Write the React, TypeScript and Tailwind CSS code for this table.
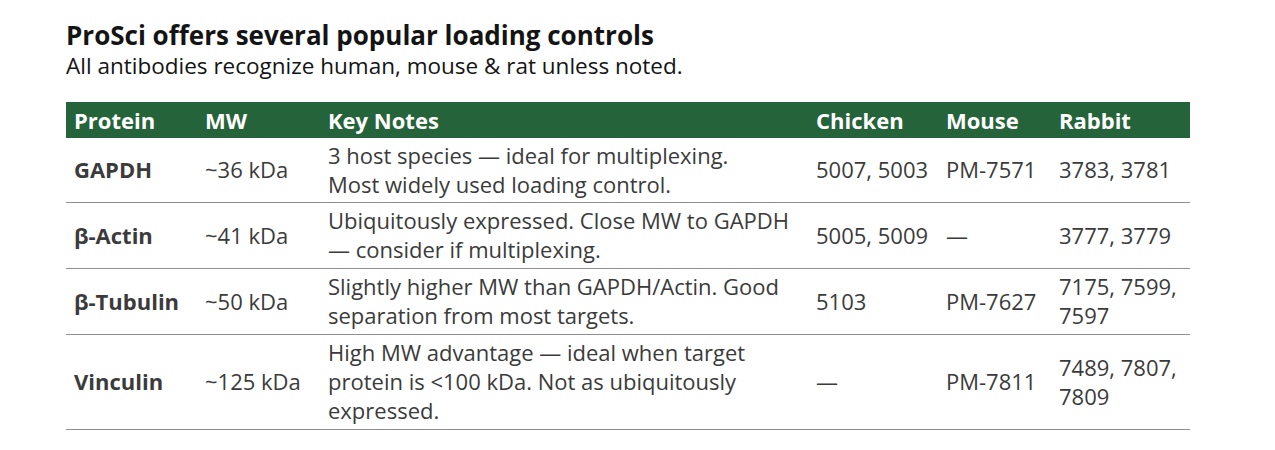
const rows = [
  {
    protein: "GAPDH",
    mw: "~36 kDa",
    notes: ["3 host species — ideal for multiplexing.", "Most widely used loading control."],
    chicken: "5007, 5003",
    mouse: "PM-7571",
    rabbit: ["3783, 3781"],
    h: "h-[64px]",
  },
  {
    protein: "β-Actin",
    mw: "~41 kDa",
    notes: ["Ubiquitously expressed. Close MW to GAPDH", "— consider if multiplexing."],
    chicken: "5005, 5009",
    mouse: "—",
    rabbit: ["3777, 3779"],
    h: "h-[66px]",
  },
  {
    protein: "β-Tubulin",
    mw: "~50 kDa",
    notes: ["Slightly higher MW than GAPDH/Actin. Good", "separation from most targets."],
    chicken: "5103",
    mouse: "PM-7627",
    rabbit: ["7175, 7599,", "7597"],
    h: "h-[66px]",
  },
  {
    protein: "Vinculin",
    mw: "~125 kDa",
    notes: [
      "High MW advantage — ideal when target",
      "protein is <100 kDa. Not as ubiquitously",
      "expressed.",
    ],
    chicken: "—",
    mouse: "PM-7811",
    rabbit: ["7489, 7807,", "7809"],
    h: "h-[95px]",
  },
];

export default function App() {
  return (
    <div className="min-h-screen w-[1275px] bg-white pl-[66px] pt-[21px] font-['Open_Sans',sans-serif] text-[#3b3b3b]">
      <h1 className="text-[26px] font-bold leading-[28px] text-[#141414]">
        ProSci offers several popular loading controls
      </h1>
      <p className="mt-[3px] text-[22.5px] leading-[28px] text-[#141414]">
        All antibodies recognize human, mouse &amp; rat unless noted.
      </p>

      <table className="mt-[22px] w-[1124px] table-fixed border-collapse text-[22px] leading-[29px]">
        <colgroup>
          <col className="w-[131px]" />
          <col className="w-[123px]" />
          <col className="w-[488px]" />
          <col className="w-[130px]" />
          <col className="w-[113px]" />
          <col className="w-[139px]" />
        </colgroup>
        <thead>
          <tr className="h-[36px] bg-[#25633a] text-left text-white">
            <th className="pl-[8px] font-bold">Protein</th>
            <th className="pl-[8px] font-bold">MW</th>
            <th className="pl-[8px] font-bold">Key Notes</th>
            <th className="pl-[8px] font-bold">Chicken</th>
            <th className="pl-[8px] font-bold">Mouse</th>
            <th className="pl-[8px] font-bold">Rabbit</th>
          </tr>
        </thead>
        <tbody>
          {rows.map((r) => (
            <tr key={r.protein} className={`${r.h} border-b border-[#8f8f8f] align-middle`}>
              <td className="pl-[8px] font-bold whitespace-nowrap">{r.protein}</td>
              <td className="pl-[8px] whitespace-nowrap">{r.mw}</td>
              <td className="pl-[8px]">
                {r.notes.map((line) => (
                  <div key={line} className="whitespace-nowrap">
                    {line}
                  </div>
                ))}
              </td>
              <td className="pl-[8px] whitespace-nowrap">{r.chicken}</td>
              <td className="pl-[8px] whitespace-nowrap">{r.mouse}</td>
              <td className="pl-[8px]">
                {r.rabbit.map((line) => (
                  <div key={line} className="whitespace-nowrap">
                    {line}
                  </div>
                ))}
              </td>
            </tr>
          ))}
        </tbody>
      </table>
    </div>
  );
}
